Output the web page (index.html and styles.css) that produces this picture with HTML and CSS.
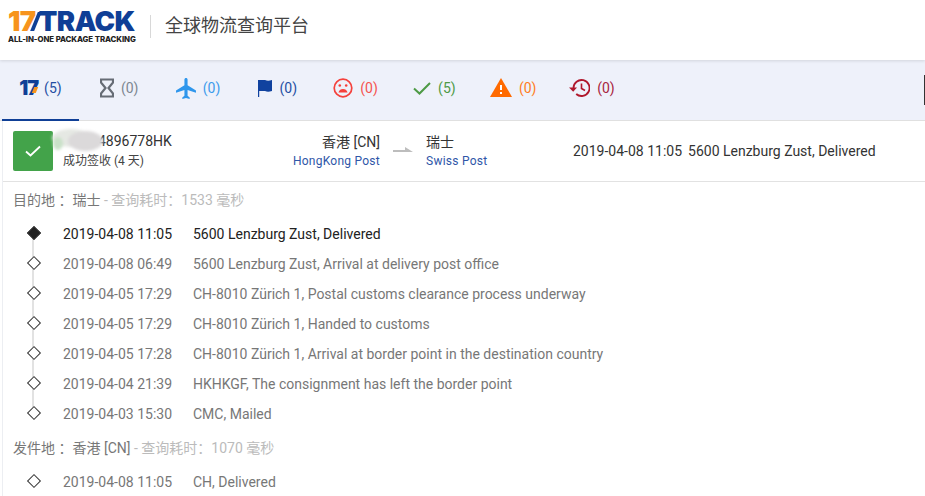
FILE: index.html
```html
<!DOCTYPE html>
<html lang="zh">
<head>
<meta charset="utf-8">
<title>17TRACK</title>
<link rel="stylesheet" href="styles.css">
</head>
<body>
<header class="top">
  <div class="logo">
    <div class="logo-mark"><span class="o">17</span><span class="slash"></span><span class="b">TRACK</span></div>
    <div class="logo-sub">ALL-IN-ONE PACKAGE TRACKING</div>
  </div>
  <div class="top-title">全球物流查询平台</div>
</header>
<nav class="tabs">
  <a class="tab active"><span class="mini"><span class="mb">17</span><span class="slash small"></span></span><span class="c navy">(5)</span></a>
  <a class="tab"><svg width="14" height="20" viewBox="0 0 14 20"><path d="M1 1.500h12v3L8.500 10 13 15.500v3H1v-3L5.500 10 1 4.500z" fill="none" stroke="#666c75" stroke-width="2.200"/></svg><span class="c grey">(0)</span></a>
  <a class="tab"><svg width="20" height="21" viewBox="2 2 19 20"><path fill="#2e96ec" d="M21 16v-2l-8-5V3.500c0-.83-.67-1.500-1.500-1.500S10 2.670 10 3.500V9l-8 5v2l8-2.500V19l-2 1.500V22l3.500-1 3.500 1v-1.500L13 19v-5.500l8 2.500z"/></svg><span class="c sky">(0)</span></a>
  <a class="tab"><svg width="16" height="20" viewBox="0 0 16 20"><path fill="#10429f" d="M1 2h7c2 1 4 1 7 0v11c-3 1-5 1-7 0H2.200v6H1z"/></svg><span class="c navy">(0)</span></a>
  <a class="tab"><svg width="20" height="20" viewBox="0 0 20 20"><circle cx="10" cy="10" r="8.800" fill="none" stroke="#f5413c" stroke-width="1.700"/><circle cx="6.800" cy="7.500" r="1.300" fill="#f5413c"/><circle cx="13.200" cy="7.500" r="1.300" fill="#f5413c"/><path fill="#f5413c" d="M5.500 14.500c.5-2.500 2.500-3.500 4.500-3.500s4 1 4.500 3.500z"/></svg><span class="c red">(0)</span></a>
  <a class="tab"><svg width="18" height="20" viewBox="0 0 18 20"><path d="M1 10.500l5.500 5L17 5" fill="none" stroke="#4d9a45" stroke-width="2"/></svg><span class="c green">(5)</span></a>
  <a class="tab"><svg width="22" height="20" viewBox="0 0 22 20"><path fill="#ff6a00" d="M11 0l11 19H0z"/><rect x="10" y="7" width="2" height="5" fill="#fff"/><rect x="10" y="14" width="2" height="2" fill="#fff"/></svg><span class="c orange">(0)</span></a>
  <a class="tab"><svg width="21" height="20" viewBox="0 0 21 20"><path d="M4.500 10a8 8 0 1 1 2.700 6" fill="none" stroke="#b0182c" stroke-width="1.800"/><path fill="#b0182c" d="M0 9.500h8L4.200 13.800z"/><path d="M12.500 5.500v5l3.500 2" fill="none" stroke="#b0182c" stroke-width="1.600"/></svg><span class="c maroon">(0)</span></a>
</nav>
<div class="edge-mark"></div>
<main class="page">
  <section class="summary">
    <div class="badge"><svg width="16" height="12" viewBox="0 0 16 12"><path d="M1 6.500l4.500 4L15 1.500" fill="none" stroke="#fff" stroke-width="1.800"/></svg></div>
    <div class="ident">
      <div class="num">4896778HK</div>
      <div class="state">成功签收 (4 天)</div>
    </div>
    <div class="blob"><i class="b1"></i><i class="b2"></i><i class="b3"></i></div>
    <div class="route from"><div class="place">香港 [CN]</div><div class="carrier">HongKong Post</div></div>
    <svg class="arrow" width="20" height="8" viewBox="0 0 20 8"><path fill="#bdbdbd" d="M0 3h12V0l8 5H0z"/></svg>
    <div class="route"><div class="place">瑞士</div><div class="carrier">Swiss Post</div></div>
    <div class="latest"><span>2019-04-08 11:05</span><span>5600 Lenzburg Zust, Delivered</span></div>
  </section>
  <section class="detail">
    <h3 class="head">目的地 <span class="colon">：</span><b>瑞士</b><em> - 查询耗时<span class="colon">：</span>1533 毫秒</em></h3>
    <ul class="events">
      <li class="ev first"><span class="t">2019-04-08 11:05</span><span>5600 Lenzburg Zust, Delivered</span></li>
      <li class="ev"><span class="t">2019-04-08 06:49</span><span>5600 Lenzburg Zust, Arrival at delivery post office</span></li>
      <li class="ev"><span class="t">2019-04-05 17:29</span><span>CH-8010 Zürich 1, Postal customs clearance process underway</span></li>
      <li class="ev"><span class="t">2019-04-05 17:29</span><span>CH-8010 Zürich 1, Handed to customs</span></li>
      <li class="ev"><span class="t">2019-04-05 17:28</span><span>CH-8010 Zürich 1, Arrival at border point in the destination country</span></li>
      <li class="ev"><span class="t">2019-04-04 21:39</span><span>HKHKGF, The consignment has left the border point</span></li>
      <li class="ev last"><span class="t">2019-04-03 15:30</span><span>CMC, Mailed</span></li>
    </ul>
    <h3 class="head second">发件地 <span class="colon">：</span><b>香港 [CN]</b><em> - 查询耗时<span class="colon">：</span>1070 毫秒</em></h3>
    <ul class="events">
      <li class="ev last"><span class="t">2019-04-08 11:05</span><span>CH, Delivered</span></li>
    </ul>
  </section>
</main>
</body>
</html>
```
FILE: styles.css
```css
* { box-sizing: border-box; }
html, body { margin: 0; padding: 0; }
body {
  width: 925px; height: 496px; overflow: hidden; background: #fff; position: relative;
  font-family: Roboto, "Noto Sans CJK SC", sans-serif; font-size: 14px; color: #333;
}
.top {
  height: 60px; display: flex; align-items: flex-start; background: #fff;
  box-shadow: 0 1px 3px rgba(0,0,0,.12); position: relative; padding: 9px 0 0 8px;
}
.logo { width: 128px; }
.logo-mark { display: flex; align-items: center; height: 24px; font: 900 27.500px/24px Inter, sans-serif; letter-spacing: -.6px; }
.logo-mark .o { color: #f7941d; }
.logo-mark .b { color: #0f3f96; }
.slash { display: inline-block; width: 4px; height: 19px; background: #0f3f96; transform: skewX(-22deg); margin: 0 1px 0 -2px; }
.slash.small { width: 4px; height: 6px; background: #f7941d; margin: 9px 0 0 -5px; }
.logo-sub { font: 800 7.800px/10px Inter, sans-serif; color: #222; margin-top: 1px; white-space: nowrap; letter-spacing: -.07px; }
.top-title {
  margin: 6px 0 0 14px; padding-left: 14px; border-left: 1px solid #d8d8d8; height: 23px;
  font: 400 18px/18px "Noto Sans CJK SC", sans-serif; color: #444; white-space: nowrap;
}
.tabs {
  height: 61px; background: #eef1fa; border-bottom: 1px solid #e0e0e0; display: flex; padding-left: 1px;
}
.tab {
  width: 78.8px; height: 60px; display: flex; align-items: center; justify-content: center; gap: 7px;
  font-size: 14px; position: relative;
}
.tab svg { display: block; flex: none; margin-top: -4px; }
.tab .c { margin-top: -4px; }
.tab.active::after { content: ""; position: absolute; left: 1px; right: 1px; bottom: -1px; height: 2px; background: #0f3f96; }
.mini { display: flex; font: 900 20px/20px Inter, sans-serif; letter-spacing: -1px; margin-top: -4px; }
.mb { color: #0f3f96; }
.navy { color: #1f4ea3; } .grey { color: #7d8791; } .sky { color: #3d9bec; } .red { color: #f5534e; }
.green { color: #4d9a45; } .orange { color: #ff7d22; } .maroon { color: #a8243e; }
.edge-mark { position: absolute; left: 924px; top: 75px; width: 1px; height: 30px; background: #333; }
.page { margin-left: 2px; border-left: 1px solid #eceef2; }
.summary {
  height: 61px; display: flex; align-items: center; border-bottom: 1px solid #e2e2e2; padding-left: 10px; position: relative;
}
.badge { width: 40px; height: 40px; border-radius: 2px; background: #43a34a; display: flex; align-items: center; justify-content: center; flex: none; }
.ident { width: 229px; padding-left: 10px; }
.num { padding-left: 35px; line-height: 20px; color: #333; }
.state { font-size: 12px; line-height: 20px; color: #444; }
.blob { position: absolute; left: 47px; top: 7px; width: 55px; height: 25px; filter: blur(1.500px); }
.blob i { position: absolute; display: block; border-radius: 50%; }
.b1 { left: 2px; top: 1px; width: 38px; height: 18px; background: #e5e8e3; }
.b2 { left: 18px; top: 3px; width: 35px; height: 20px; background: #dbd9da; }
.b3 { left: 3px; top: 9px; width: 10px; height: 13px; background: #c9e1c8; }
.route { width: 90px; }
.route.from { width: 98px; text-align: right; }
.place { font-size: 14px; line-height: 20px; color: #333; }
.carrier { font-size: 12px; line-height: 18px; color: #2f56a8; letter-spacing: .25px; white-space: nowrap; }
.arrow { margin: 0 13px; flex: none; }
.route:not(.from) { width: 147px; }
.latest { display: flex; gap: 6px; white-space: nowrap; color: #333; margin-top: -1px; }
.detail { padding-top: 7px; }
.head { margin: 0; padding-left: 10px; height: 20px; font: 400 14px/20px Roboto, "Noto Sans CJK SC", sans-serif; color: #777; white-space: nowrap; }
.head b { font-weight: 400; color: #777; }
.head em { font-style: normal; color: #bbb; }
.colon { font-family: "Noto Sans CJK TC", sans-serif; }
.head.second { margin-top: 3px; }
.events { list-style: none; margin: 15px 0 0; padding: 0; }
.ev { position: relative; height: 30px; padding-left: 60px; display: flex; line-height: 20px; color: #777; white-space: nowrap; }
.ev .t { width: 130px; flex: none; }
.ev.first { color: #222; }
.ev::before {
  content: ""; position: absolute; left: 26px; top: 4px; width: 8px; height: 8px; background: #fff;
  border: 1px solid #333; transform: rotate(45deg); z-index: 1;
}
.ev.first::before { background: #222; }
.ev::after { content: ""; position: absolute; left: 29px; top: 10px; width: 2px; height: 30px; background: #e2e2e2; }
.ev.last::after { display: none; }
```
